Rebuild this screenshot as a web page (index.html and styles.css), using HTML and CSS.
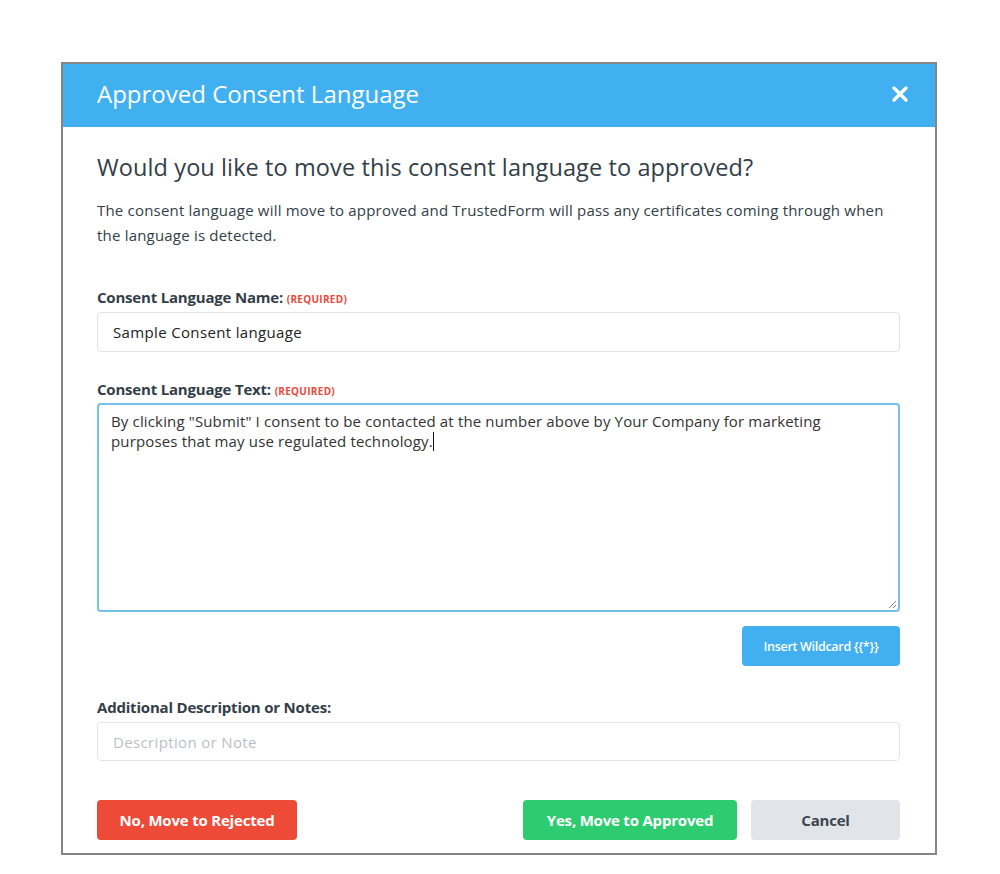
FILE: index.html
```html
<!DOCTYPE html>
<html lang="en">
<head>
<meta charset="utf-8">
<title>Approved Consent Language</title>
<link rel="stylesheet" href="styles.css">
</head>
<body>
<div class="modal">
  <div class="modal-header">
    <h1 class="modal-title">Approved Consent Language</h1>
    <button class="close" aria-label="Close">
      <svg width="16" height="16" viewBox="0 0 16 16"><path d="M2 2 L14 14 M14 2 L2 14" stroke="#fff" stroke-width="3.2" stroke-linecap="round"/></svg>
    </button>
  </div>
  <div class="modal-body">
    <h2 class="question">Would you like to move this consent language to approved?</h2>
    <p class="desc">The consent language will move to approved and TrustedForm will pass any certificates coming through when the language is detected.</p>

    <div class="field first">
      <label class="label">Consent Language Name: <span class="req">(REQUIRED)</span></label>
      <div class="input">Sample Consent language</div>
    </div>

    <div class="field">
      <label class="label">Consent Language Text: <span class="req">(REQUIRED)</span></label>
      <div class="textarea">By clicking "Submit" I consent to be contacted at the number above by Your Company for marketing purposes that may use regulated technology.<span class="caret"></span>
        <svg class="grip" width="10" height="10" viewBox="0 0 10 10"><path d="M9 2 L2 9 M9 6 L6 9" stroke="#8a8a8a" stroke-width="1"/></svg>
      </div>
    </div>

    <div class="wild-row">
      <button class="btn btn-wild">Insert Wildcard {{*}}</button>
    </div>

    <div class="field notes">
      <label class="label">Additional Description or Notes:</label>
      <div class="input placeholder">Description or Note</div>
    </div>

    <div class="actions">
      <button class="btn btn-reject">No, Move to Rejected</button>
      <div class="right">
        <button class="btn btn-approve">Yes, Move to Approved</button>
        <button class="btn btn-cancel">Cancel</button>
      </div>
    </div>
  </div>
</div>
</body>
</html>
```

FILE: styles.css
```css
* { box-sizing: border-box; }
html, body { margin: 0; padding: 0; background: #fff; }
body {
  font-family: "Open Sans", "Liberation Sans", sans-serif;
  color: #333e48;
  padding-top: 62px;
  padding-left: 61px;
}
.modal {
  width: 876px;
  border: 2px solid #858585;
  background: #fff;
}
.modal-header {
  height: 63px;
  background: #41b0f0;
  display: flex;
  align-items: center;
  justify-content: space-between;
  padding: 0 27px 4px 34px;
}
.modal-title {
  margin: 0;
  font-size: 24px;
  line-height: 30px;
  font-weight: 400;
  color: #fff;
  letter-spacing: 0;
}
.close {
  background: none;
  border: 0;
  padding: 0;
  width: 16px;
  height: 16px;
  display: flex;
}
.modal-body {
  padding: 25px 35px 13px 34px;
}
.question {
  margin: 0;
  font-size: 23.5px;
  line-height: 30px;
  font-weight: 400;
  color: #333e48;
  letter-spacing: 0.1px;
}
.desc {
  margin: 16px 0 0;
  font-size: 15px;
  line-height: 25px;
  color: #333e48;
  letter-spacing: 0.2px;
  max-width: 796px;
}
.field { margin-top: 28px; }
.field.first { margin-top: 40px; }
.field.notes { margin-top: 32px; }
.label {
  display: block;
  height: 18px;
  font-size: 15px;
  line-height: 18px;
  font-weight: 700;
  color: #333e48;
  margin-bottom: 6px;
  letter-spacing: -0.2px;
}
.req {
  font-size: 10px;
  line-height: 1;
  font-weight: 700;
  color: #e8493a;
  letter-spacing: 0.3px;
}
.input {
  height: 40px;
  border: 1px solid #e1e5ea;
  border-radius: 4px;
  padding: 0 15px;
  display: flex;
  align-items: center;
  font-size: 15px;
  color: #222;
  letter-spacing: 0.35px;
}
.notes .input { height: 39px; }
.input.placeholder { color: #b8bfc7; }
.textarea {
  position: relative;
  height: 209px;
  border: 2px solid #74c0ec;
  border-radius: 4px;
  padding: 6px 12px;
  font-size: 15px;
  line-height: 20px;
  color: #333;
  margin-top: -1px;
  letter-spacing: 0.15px;
}
.caret {
  display: inline-block;
  width: 1px;
  height: 19px;
  background: #111;
  vertical-align: -4px;
}
.grip {
  position: absolute;
  right: 1px;
  bottom: 1px;
}
.wild-row {
  display: flex;
  justify-content: flex-end;
  margin-top: 14px;
}
.btn {
  border: 0;
  border-radius: 4px;
  font-family: inherit;
  font-weight: 700;
  cursor: pointer;
  letter-spacing: -0.2px;
}
.btn-wild {
  width: 158px;
  height: 40px;
  background: #41aff0;
  color: #fff;
  font-size: 12.5px;
  font-weight: 600;
  letter-spacing: -0.3px;
}
.actions {
  display: flex;
  justify-content: space-between;
  margin-top: 39px;
}
.right { display: flex; gap: 14px; }
.btn-reject, .btn-approve, .btn-cancel {
  height: 40px;
  font-size: 15px;
}
.btn-reject { width: 200px; background: #ee4a38; color: #fff; }
.btn-approve { width: 214px; background: #2ecc71; color: #fff; }
.btn-cancel { width: 149px; background: #e1e5ea; color: #3c4650; }
```
